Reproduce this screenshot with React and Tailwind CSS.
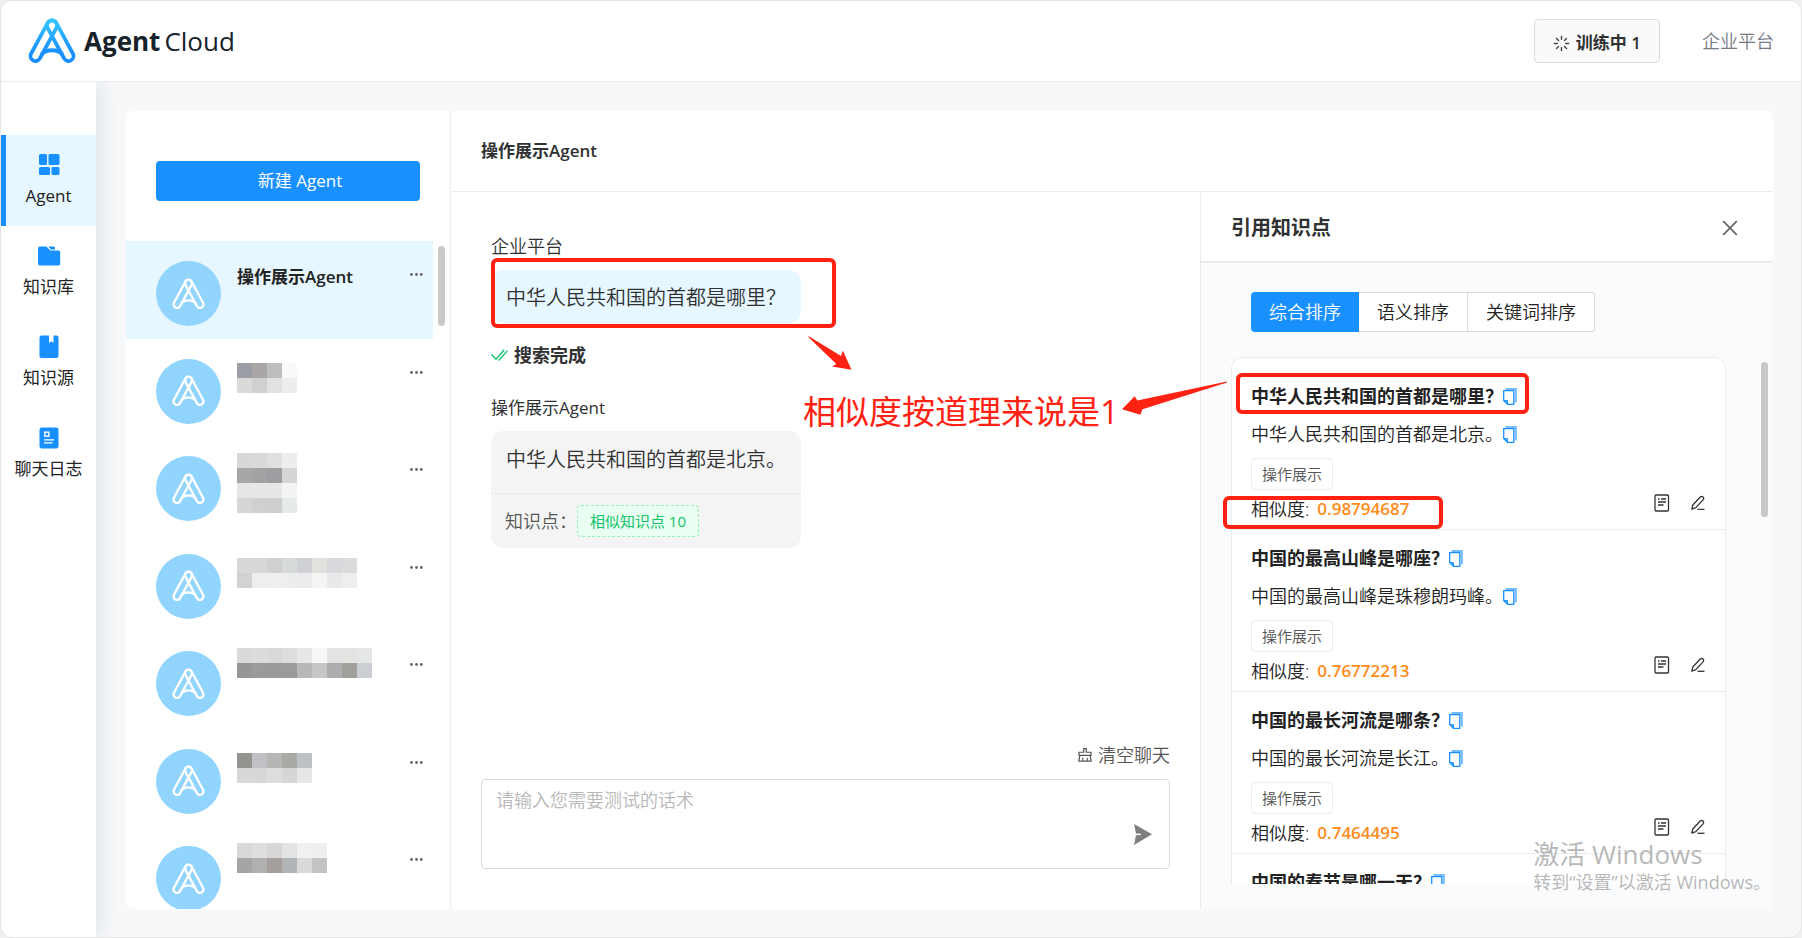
import { useState } from 'react';
import { AiOutlineClear, AiOutlineClose } from 'react-icons/ai';
import { Loader } from 'lucide-react';

const navItems = [
  { id: 'agent', label: 'Agent', icon: AgentIcon },
  { id: 'library', label: '知识库', icon: FolderIcon },
  { id: 'source', label: '知识源', icon: BookIcon },
  { id: 'log', label: '聊天日志', icon: LogIcon },
];

// masked agent names, one row of 15px blocks per line
const maskedAgents = [
  {
    id: 2,
    pad: 'pt-6',
    rows: [
      ['bg-[#9b9ea4]', 'bg-[#aaa6a6]', 'bg-[#bebdc0]', 'bg-[#f8f9fb]'],
      ['bg-[#dadad9]', 'bg-[#d0d0d1]', 'bg-[#e1e1e4]', 'bg-[#eceded]'],
    ],
  },
  {
    id: 3,
    pad: 'pt-[17px]',
    rows: [
      ['bg-[#d8d8d9]', 'bg-[#d9d9da]', 'bg-[#e0e0e1]', 'bg-[#eceeee]'],
      ['bg-[#a9a7a5]', 'bg-[#a3a3a4]', 'bg-[#9d9ea1]', 'bg-[#d4d6d5]'],
      ['bg-[#e6e6e7]', 'bg-[#e6e7e6]', 'bg-[#e7e7e7]', 'bg-[#f2f3f3]'],
      ['bg-[#d8d6d5]', 'bg-[#cfd1d0]', 'bg-[#cecfce]', 'bg-[#e5eaeb]'],
    ],
  },
  {
    id: 4,
    pad: 'pt-6',
    rows: [
      ['bg-[#d8d8d9]', 'bg-[#d9d6d8]', 'bg-[#d1cfd1]', 'bg-[#d6dadb]', 'bg-[#d0d1d4]', 'bg-[#e1e1de]', 'bg-[#d8d9dc]', 'bg-[#dbdbde]'],
      ['bg-[#d2d2d2]', 'bg-[#eeeeee]', 'bg-[#f1eeef]', 'bg-[#ebeeed]', 'bg-[#ebecec]', 'bg-[#f4f4f4]', 'bg-[#e9e9ea]', 'bg-[#eeeeee]'],
    ],
  },
  {
    id: 5,
    pad: 'pt-[17px]',
    rows: [
      ['bg-[#dadada]', 'bg-[#dcdcdd]', 'bg-[#d9d9da]', 'bg-[#dcdddf]', 'bg-[#e7e7e8]', 'bg-[#f6f8f8]', 'bg-[#e3e3e3]', 'bg-[#e3e4e2]', 'bg-[#e5e6e6]'],
      ['bg-[#969696]', 'bg-[#9c9b9a]', 'bg-[#9b9a9a]', 'bg-[#9b9b9b]', 'bg-[#b8b8bb]', 'bg-[#c6c6c6]', 'bg-[#adadb0]', 'bg-[#a1a09b]', 'bg-[#cbced2]'],
    ],
  },
  {
    id: 6,
    pad: 'pt-6',
    rows: [
      ['bg-[#949390]', 'bg-[#c0c1c4]', 'bg-[#b6b6b5]', 'bg-[#a9a9a5]', 'bg-[#bdc1c5]'],
      ['bg-[#d9d8d8]', 'bg-[#d7d7d8]', 'bg-[#dddddd]', 'bg-[#d6d6d4]', 'bg-[#e5e7e9]'],
    ],
  },
  {
    id: 7,
    pad: 'pt-[17px]',
    rows: [
      ['bg-[#d9d9da]', 'bg-[#dddfdf]', 'bg-[#d9d7d6]', 'bg-[#e2e3e5]', 'bg-[#eff0f0]', 'bg-[#eeefef]'],
      ['bg-[#a5a5a5]', 'bg-[#b0b0b1]', 'bg-[#a49f9d]', 'bg-[#b1b5b7]', 'bg-[#d9d9d7]', 'bg-[#c3c3c4]'],
    ],
  },
];

const sortTabs = ['综合排序', '语义排序', '关键词排序'];

const knowledge = [
  { q: '中华人民共和国的首都是哪里？', a: '中华人民共和国的首都是北京。', score: '0.98794687' },
  { q: '中国的最高山峰是哪座？', a: '中国的最高山峰是珠穆朗玛峰。', score: '0.76772213' },
  { q: '中国的最长河流是哪条？', a: '中国的最长河流是长江。', score: '0.7464495' },
  { q: '中国的春节是哪一天？' },
];

function LogoMark({ className, stroke, width }) {
  return (
    <svg viewBox="0 0 48 46" className={className} fill="none" stroke={stroke} strokeWidth={width} strokeLinejoin="round">
      <defs>
        <linearGradient id="logo" x1="0" y1="0" x2="0" y2="46" gradientUnits="userSpaceOnUse">
          <stop offset="0" stopColor="#36c8ff" />
          <stop offset="0.75" stopColor="#1890ff" />
        </linearGradient>
      </defs>
      <path d="M19.6 5.1 3.1 35.6A5 5 0 0 0 11.9 40.4L28.4 9.9A5 5 0 0 0 19.6 5.1Z" />
      <path d="M28.4 5.1 44.9 35.6A5 5 0 0 1 36.1 40.4L19.6 9.9A5 5 0 0 1 28.4 5.1Z" />
      <path d="M13.5 36.5C18 30.8 30 30.8 34.5 36.5" />
    </svg>
  );
}

function AgentIcon() {
  return (
    <svg viewBox="0 0 24 24" className="size-6" fill="#1890ff">
      <rect x="2" y="1" width="8" height="11" rx="1.5" />
      <rect x="11.5" y="1" width="11" height="11" rx="1.5" />
      <rect x="2" y="14" width="11" height="8" rx="1.5" />
      <rect x="14.5" y="14" width="8" height="8" rx="1.5" />
    </svg>
  );
}

function FolderIcon() {
  return (
    <svg viewBox="0 0 24 24" className="size-6" fill="#1890ff">
      <path d="M1 4.2A1.7 1.7 0 0 1 2.7 2.5H9.5L13.2 6.6H21.7A1.5 1.5 0 0 1 23.2 8.1V19.8A1.7 1.7 0 0 1 21.5 21.5H2.7A1.7 1.7 0 0 1 1 19.8Z" />
      <path d="M11.3 2.6H16.5A1.5 1.5 0 0 1 18 4.1V5.4H13.8Z" />
    </svg>
  );
}

function BookIcon() {
  return (
    <svg viewBox="0 0 24 24" className="size-6" fill="#1890ff">
      <path d="M4.5 .5H12V8L14.2 6.2 16.5 8V.5H19.5A2 2 0 0 1 21.5 2.5V21A2 2 0 0 1 19.5 23H4.5A2 2 0 0 1 2.5 21V2.5A2 2 0 0 1 4.5 .5Z" />
    </svg>
  );
}

function LogIcon() {
  return (
    <svg viewBox="0 0 24 24" className="size-6" fill="none" stroke="#fff" strokeWidth="1.4">
      <rect x="2.5" y="1.5" width="19" height="21" rx="2.2" fill="#1890ff" stroke="none" />
      <rect x="7.8" y="6.2" width="4" height="4" />
      <path d="M7 13.8H17M7 16.9H15.5" strokeWidth="1.2" />
    </svg>
  );
}

function CopyIcon() {
  return (
    <svg viewBox="0 0 14 17" className="h-[17px] w-[14px]" fill="none">
      <path d="M2.5 0H13.8V14.5H11.8V2H2.5Z" fill="#74bbff" />
      <path d="M.7 2.7H10.8V16.3H4.5L.7 12.6Z" fill="#fff" stroke="#1890ff" strokeWidth="1.3" />
      <path d="M.7 12.6H4.5V16.3Z" fill="#1890ff" fillOpacity=".6" stroke="#1890ff" />
    </svg>
  );
}

function DocIcon() {
  return (
    <svg viewBox="0 0 16 18" className="h-[18px] w-4" fill="none" stroke="#333" strokeWidth="1.3">
      <rect x="1" y="1" width="13.5" height="16" rx="1" />
      <path d="M4 5H5.5M7 5H12M4 8H12M4 11H9.5" />
    </svg>
  );
}

function PenIcon() {
  return (
    <svg viewBox="0 0 16 16" className="size-4" fill="none" stroke="#333" strokeWidth="1.3" strokeLinejoin="round">
      <path d="M1.8 14.2 2.8 10 10.5 1.8Q11.8 1 13 2.1T13.3 4.6L5.8 12.6Z" />
      <path d="M7.5 14.3H14.5" />
    </svg>
  );
}

function Dots() {
  return (
    <svg viewBox="0 0 13 3" className="h-[3px] w-[13px]" fill="#666">
      <circle cx="1.5" cy="1.5" r="1.4" />
      <circle cx="6.5" cy="1.5" r="1.4" />
      <circle cx="11.3" cy="1.5" r="1.4" />
    </svg>
  );
}

function AgentRow({ active, pad, children }) {
  return (
    <li className={active ? 'flex bg-[#e6f7ff] pr-[10px] pl-[30px]' : 'flex pr-[10px] pl-[30px]'}>
      <span className="mt-5 flex size-[65px] shrink-0 items-center justify-center rounded-full bg-[#91d5ff]">
        <LogoMark className="h-8 w-[35px]" stroke="#fff" width="3.4" />
      </span>
      <div className={'min-w-0 flex-1 pl-4 ' + pad}>{children}</div>
      <button type="button" aria-label="更多" className="mt-[31px] flex h-[5px] items-center">
        <Dots />
      </button>
    </li>
  );
}

function KnowledgeItem({ item }) {
  return (
    <li className="flex h-[162px] shrink-0 flex-col border-b border-[#ebecee] px-[19px]">
      <div className="flex items-center pt-4">
        <h4 className="text-lg leading-6 font-bold text-[#222]">{item.q}</h4>
        <button type="button" aria-label="复制问题"><CopyIcon /></button>
      </div>
      {item.a && (
        <>
          <div className="flex items-center pt-[14px]">
            <p className="text-lg leading-6 font-[350] text-[#222]">{item.a}</p>
            <button type="button" aria-label="复制答案"><CopyIcon /></button>
          </div>
          <span className="mt-3 flex h-8 w-[82px] shrink-0 items-center justify-center rounded border border-[#ebecee] text-[15px] font-[350] text-[#555]">
            操作展示
          </span>
          <div className="flex items-center pt-1">
            <span className="text-lg leading-6 font-[350] text-[#222]">相似度:</span>
            <span className="ml-2 text-[17px] leading-6 font-semibold text-[#ff8c1a]">{item.score}</span>
            <div className="mb-3 ml-auto flex items-center gap-5">
              <button type="button" aria-label="查看"><DocIcon /></button>
              <button type="button" aria-label="编辑"><PenIcon /></button>
            </div>
          </div>
        </>
      )}
    </li>
  );
}

// red marks drawn over the panels
function Annotations() {
  return (
    <div className="pointer-events-none absolute -inset-px">
      <div className="absolute top-[258px] left-[491px] h-[70px] w-[345px] rounded-md border-4 border-[#ff2213]" />
      <div className="absolute top-[373px] left-[1236px] h-[41px] w-[293px] rounded-md border-4 border-[#ff2213]" />
      <div className="absolute top-[496px] left-[1223px] h-[33px] w-[220px] rounded-md border-4 border-[#ff2213]" />
      <svg viewBox="0 0 44 34" className="absolute top-[336px] left-[808px] h-[34px] w-[44px]" fill="#ff2213">
        <path d="M0 .8 1.2 .5 33 20 34.8 14.5 43.5 33.7 24 30.5 28.3 28Z" />
      </svg>
      <svg viewBox="0 0 106 34" className="absolute top-[381px] left-[1122px] h-[34px] w-[106px]" fill="#ff2213">
        <path d="M105 .5V1.5L20.5 28.2 18.3 33.8 0 28.3 12.7 15.3 15.3 19.5Z" />
      </svg>
      <p className="absolute top-[390px] left-[803px] text-[33px] leading-[44px] whitespace-nowrap text-[#ff2213]">
        相似度按道理来说是1
      </p>
    </div>
  );
}

export default function App() {
  const [nav, setNav] = useState('agent');
  const [sort, setSort] = useState(0);
  const [text, setText] = useState('');

  return (
    <div className="bg-[#f0f0f0]">
      <div className="relative flex h-screen flex-col overflow-hidden rounded-xl border border-[#e6e6e6] bg-[#f6f8fa] font-['Open_Sans','Noto_Sans_CJK_SC',sans-serif] text-[#303133]">
        <header className="z-20 flex h-[81px] shrink-0 items-center border-b border-[#ebecee] bg-white px-[27px]">
          <a href="#home" className="flex items-center text-[#17222b]">
            <LogoMark className="h-[46px] w-12" stroke="url(#logo)" width="3.8" />
            <span className="ml-2 text-[26px] leading-9 font-bold">Agent</span>
            <span className="ml-1 text-[26px] leading-9">Cloud</span>
          </a>
          <button type="button" className="ml-auto flex h-11 items-center gap-[6px] rounded border border-[#dcdcdc] bg-[#fafafa] px-[18px] pt-1 text-[17px] font-bold">
            <Loader className="size-[17px] text-[#444]" strokeWidth={2} />
            <span>训练中 <span className="font-semibold">1</span></span>
          </button>
          <a href="#platform" className="ml-[42px] text-lg font-[350] text-[#777b84]">企业平台</a>
        </header>

        <div className="flex min-h-0 flex-1">
          <nav className="z-10 w-[95px] shrink-0 bg-white pt-[53px] shadow-[4px_0_20px_rgba(30,40,80,0.10)]">
            {navItems.map(({ id, label, icon: Icon }) => (
              <button
                key={id}
                type="button"
                onClick={() => setNav(id)}
                className={
                  nav === id
                    ? 'flex h-[91px] w-full flex-col items-center gap-[7px] border-l-5 border-[#1890ff] bg-[#e6f7ff] pt-[18px] pr-[5px]'
                    : 'flex h-[91px] w-full flex-col items-center gap-[7px] pt-[18px]'
                }
              >
                <Icon />
                <span className="text-[17px] leading-6 whitespace-nowrap text-[#222]">{label}</span>
              </button>
            ))}
          </nav>

          <main className="mt-[29px] mr-7 mb-7 ml-[30px] flex min-w-0 flex-1 overflow-hidden rounded-md bg-white">
            <aside className="flex w-[325px] shrink-0 flex-col border-r border-[#ebecee]">
              <button type="button" className="mx-[30px] mt-[50px] h-10 shrink-0 rounded bg-[#1890ff] pl-6 text-[17px] text-white">
                新建 Agent
              </button>
              <div className="mt-10 flex min-h-0 flex-1 overflow-hidden">
                <ul className="grid h-[683px] flex-1 grid-rows-7">
                  <AgentRow active pad="pt-6">
                    <h3 className="text-[17px] leading-6 font-bold text-[#222]">操作展示<span className="font-semibold">Agent</span></h3>
                  </AgentRow>
                  {maskedAgents.map((agent) => (
                    <AgentRow key={agent.id} pad={agent.pad}>
                      {agent.rows.map((row, i) => (
                        <div key={i} className="flex">
                          {row.map((cell, j) => (
                            <span key={j} className={'size-[15px] ' + cell} />
                          ))}
                        </div>
                      ))}
                    </AgentRow>
                  ))}
                </ul>
                <div className="w-[17px] pt-[5px] pl-[5px]">
                  <div className="h-20 w-[7px] rounded-full bg-[#c8c8c8]" />
                </div>
              </div>
            </aside>

            <section className="flex min-w-0 flex-1 flex-col">
              <div className="flex h-[81px] shrink-0 items-center border-b border-[#ebecee] px-[30px]">
                <h2 className="text-[17px] leading-6 font-bold">操作展示<span className="font-semibold">Agent</span></h2>
              </div>

              <div className="flex min-h-0 flex-1">
                <div className="flex min-w-0 flex-1 flex-col">
                  <div className="flex flex-1 flex-col items-start pt-[42px] pl-10">
                    <span className="text-lg leading-6 font-[350]">企业平台</span>
                    <p className="mt-3 w-[310px] rounded-xl bg-[#e6f7ff] pt-[14px] pb-3 pl-[15px] text-xl leading-[27px] font-[350] whitespace-nowrap">
                      中华人民共和国的首都是哪里？
                    </p>
                    <div className="mt-5 flex items-center gap-[6px]">
                      <svg viewBox="0 0 17 12" className="h-3 w-[17px]" fill="none" stroke="#13c26b" strokeWidth="1.4">
                        <path d="M.6 5.5 5 10.3 13.2 .8M7.6 10.5 8.2 11 16.4 1.6" />
                      </svg>
                      <span className="text-lg leading-6 font-bold">搜索完成</span>
                    </div>
                    <span className="mt-[29px] text-[17px] leading-6">操作展示Agent</span>
                    <div className="mt-[11px] w-[310px] rounded-xl bg-[#f4f4f4]">
                      <p className="border-b border-[#e8e8e8] pt-[15px] pb-[19px] pl-[15px] text-xl leading-7 font-[350] whitespace-nowrap">
                        中华人民共和国的首都是北京。
                      </p>
                      <div className="flex h-[54px] items-center pl-[14px]">
                        <span className="text-lg font-[350] text-[#555]">知识点：</span>
                        <button type="button" className="h-8 w-[122px] rounded border border-dashed border-[#9aeebb] bg-[#e8fff1] text-[15px] text-[#13c26b]">
                          相似知识点 10
                        </button>
                      </div>
                    </div>
                  </div>

                  <div className="flex flex-col px-[30px] pb-10">
                    <button type="button" className="flex items-center gap-1 self-end text-lg leading-6 font-[350] text-[#555]">
                      <AiOutlineClear className="size-[18px]" />
                      清空聊天
                    </button>
                    <div className="relative mt-3">
                      <textarea
                        value={text}
                        onChange={(e) => setText(e.target.value)}
                        aria-label="测试话术"
                        placeholder="请输入您需要测试的话术"
                        className="block h-[90px] w-full resize-none rounded border border-[#d9dadc] px-[14px] py-2 text-lg leading-6 font-[350] placeholder:text-[#b8b8b8]"
                      />
                      <button type="button" aria-label="发送" className="absolute right-[18px] bottom-6">
                        <svg viewBox="0 0 18 21" className="h-[21px] w-[18px]" fill="#7f7f7f">
                          <path d="M0 0 18 10.3 0 21 2 11.2 7 10.9V9.8L2 9.5Z" />
                        </svg>
                      </button>
                    </div>
                  </div>
                </div>

                <aside className="flex w-[573px] shrink-0 flex-col border-l border-[#ebecee] bg-[#fafbfd]">
                  <div className="flex h-[71px] shrink-0 items-center justify-between border-b-2 border-[#ebecee] bg-white pt-[3px] pr-8 pl-[30px]">
                    <h3 className="text-xl leading-7 font-bold">引用知识点</h3>
                    <button type="button" aria-label="关闭"><AiOutlineClose className="size-[22px] text-[#666]" /></button>
                  </div>
                  <div className="mt-[29px] ml-[50px] flex h-10 shrink-0 text-lg font-[350] text-[#222]">
                    {sortTabs.map((label, i) => (
                      <button
                        key={label}
                        type="button"
                        onClick={() => setSort(i)}
                        className={
                          sort === i
                            ? 'bg-[#1890ff] px-[18px] text-white first:rounded-l last:rounded-r'
                            : 'border-y border-r border-[#d9dadc] bg-white px-[18px] first:rounded-l first:border-l last:rounded-r'
                        }
                      >
                        {label}
                      </button>
                    ))}
                  </div>
                  <div className="mt-[25px] mb-[25px] flex min-h-0 flex-1 pl-[30px]">
                    <ul className="flex flex-1 flex-col overflow-hidden rounded-t-xl border border-b-0 border-[#ebecee] bg-white pt-[10px]">
                      {knowledge.map((item) => (
                        <KnowledgeItem key={item.q} item={item} />
                      ))}
                    </ul>
                    <div className="w-[47px] pt-[5px] pl-[35px]">
                      <div className="h-[155px] w-[7px] rounded-full bg-[#c8c8c8]" />
                    </div>
                  </div>
                </aside>
              </div>
            </section>
          </main>
        </div>

        <Annotations />
        <div className="pointer-events-none absolute right-[30px] bottom-[43px] z-20 text-[#888]/60">
          <p className="text-[26px] leading-8">激活 Windows</p>
          <p className="text-lg leading-6">转到“设置”以激活 Windows。</p>
        </div>
      </div>
    </div>
  );
}
